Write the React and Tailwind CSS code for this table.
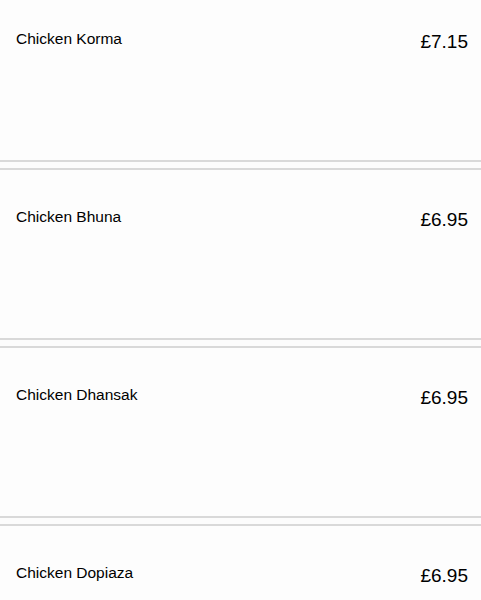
import React from "react";

const items = [
  { name: "Chicken Korma", price: "£7.15" },
  { name: "Chicken Bhuna", price: "£6.95" },
  { name: "Chicken Dhansak", price: "£6.95" },
  { name: "Chicken Dopiaza", price: "£6.95" },
];

export default function App() {
  return (
    <div className="w-[481px] h-[600px] overflow-hidden bg-[#fcfcfc]" style={{ fontFamily: '"Liberation Sans", Arial, sans-serif' }}>
      <div className="-mt-[10px] flex flex-col gap-[6px]">
        {items.map((it) => (
          <div
            key={it.name}
            className="h-[172px] shrink-0 border-y-2 border-[#d9d9d9] bg-[#fdfdfd] pl-4 pr-[13px] pt-[38px] flex justify-between items-start text-black"
          >
            <div className="text-[15.5px] leading-[17px]">{it.name}</div>
            <div className="text-[19px] leading-[20px] mt-[2px]">{it.price}</div>
          </div>
        ))}
      </div>
    </div>
  );
}
